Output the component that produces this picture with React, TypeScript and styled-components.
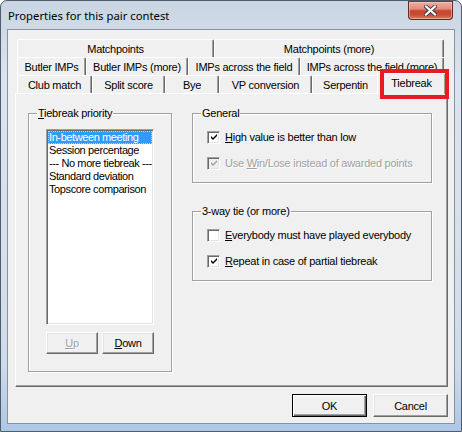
import React from 'react';
import styled, { createGlobalStyle } from 'styled-components';

const GlobalStyle = createGlobalStyle`
  html, body { margin: 0; padding: 0; background: #ffffff; }
  body { width: 462px; height: 432px; overflow: hidden; }
  * { box-sizing: border-box; }
`;

const Window = styled.div`
  width: 462px;
  height: 432px;
  display: flex;
  flex-direction: column;
  padding: 0 6px 7px 6px;
  border: 1px solid #4e5c6b;
  border-radius: 7px 7px 0 0;
  background:
    linear-gradient(180deg, rgba(255,255,255,0) 85%, rgba(150,185,228,0.55) 100%),
    linear-gradient(180deg, #c9d5e2 0%, #dbe4ee 18%, #d6e0eb 60%, #cad8e8 100%);
  font-family: "Liberation Sans", Arial, sans-serif;
  font-size: 11px;
  letter-spacing: -0.25px;
  color: #000;
`;

const TitleBar = styled.div`
  height: 28px;
  display: flex;
  align-items: flex-start;
  justify-content: space-between;
  padding-left: 1px;
`;

const TitleText = styled.div`
  height: 28px;
  display: flex;
  align-items: center;
  font-family: "Noto Sans", "Liberation Sans", sans-serif;
  font-size: 11.3px;
  letter-spacing: 0;
  color: #000;
`;

const CloseButton = styled.div`
  width: 45px;
  height: 19px;
  margin-right: 2px;
  border: 1px solid #5e2a22;
  border-top-color: #7a3a30;
  border-radius: 0 0 4px 4px;
  background: linear-gradient(180deg, #eab0a2 0%, #e08f7c 40%, #c9452d 52%, #c74b33 75%, #dd7f62 100%);
  box-shadow: inset 0 0 0 1px rgba(255, 220, 210, 0.45);
  display: flex;
  align-items: center;
  justify-content: center;
`;

const Client = styled.div`
  flex: 1;
  display: flex;
  flex-direction: column;
  border: 1px solid #8492a1;
  background: #f0f0f0;
  padding: 9px 6px 6px 7px;
`;

const TabStrip = styled.div`
  display: flex;
  flex-direction: column;
  margin-left: 2px;
`;

const TabRow = styled.div`
  display: flex;
  height: 18px;
  align-items: flex-start;
`;

const Tab = styled.div<{ $w: number; $sel?: boolean }>`
  position: relative;
  width: ${(p) => p.$w + (p.$sel ? 4 : 0)}px;
  height: ${(p) => (p.$sel ? 21 : 18)}px;
  margin: ${(p) => (p.$sel ? '-2px -2px 0 -2px' : '0')};
  z-index: ${(p) => (p.$sel ? 2 : 0)};
  display: flex;
  align-items: center;
  justify-content: center;
  padding: ${(p) => (p.$sel ? '0 0 3px 0' : '1px 0 0 0')};
  white-space: nowrap;
  background: #f0f0f0;
  border-top: 1px solid #ffffff;
  border-left: 1px solid #ffffff;
  border-right: 1px solid #696969;
  border-radius: 2px 2px 0 0;
  box-shadow: inset -1px 0 0 #a0a0a0;
`;

const Highlight = styled.div`
  position: absolute;
  left: 2px;
  top: -5px;
  width: 69px;
  height: 30px;
  border: 4px solid #e61b23;
  pointer-events: none;
`;

const Panel = styled.div`
  height: 294px;
  display: flex;
  align-items: flex-start;
  gap: 20px;
  padding: 19px 0 0 12px;
  background: #f0f0f0;
  border-top: 1px solid #ffffff;
  border-left: 1px solid #ffffff;
  border-right: 1px solid #696969;
  border-bottom: 1px solid #696969;
  box-shadow: inset -1px -1px 0 #a0a0a0;
`;

const GroupBox = styled.div<{ $w: number }>`
  position: relative;
  width: ${(p) => p.$w}px;
  border: 1px solid #a0a0a0;
  box-shadow: inset 1px 1px 0 #ffffff, 1px 1px 0 #ffffff;
`;

const GroupLabel = styled.span`
  position: absolute;
  left: 8px;
  top: -7px;
  padding: 0 1px;
  line-height: 13px;
  background: #f0f0f0;
  white-space: nowrap;
`;

const PriorityBody = styled.div`
  display: flex;
  flex-direction: column;
  gap: 7px;
  padding: 15px 0 17px 17px;
`;

const ListBox = styled.div`
  width: 108px;
  height: 196px;
  padding: 1px;
  background: #ffffff;
  border-top: 1px solid #a0a0a0;
  border-left: 1px solid #a0a0a0;
  border-right: 1px solid #ffffff;
  border-bottom: 1px solid #ffffff;
  box-shadow: inset 1px 1px 0 #696969, inset -1px -1px 0 #e3e3e3;
  display: flex;
  flex-direction: column;
`;

const ListItem = styled.div<{ $sel?: boolean }>`
  height: 13px;
  line-height: 13px;
  padding-left: 1px;
  white-space: nowrap;
  letter-spacing: -0.4px;
  color: ${(p) => (p.$sel ? '#ffffff' : '#000000')};
  background: ${(p) => (p.$sel ? '#3399ff' : 'transparent')};
  outline: ${(p) => (p.$sel ? '1px dotted #f2d36b' : 'none')};
  outline-offset: -1px;
`;

const ButtonRow = styled.div`
  display: flex;
  gap: 4px;
`;

const Button = styled.button<{ $w: number; $h: number; $default?: boolean }>`
  width: ${(p) => p.$w}px;
  height: ${(p) => p.$h}px;
  padding: 0;
  margin: 0;
  font: inherit;
  letter-spacing: inherit;
  color: #000;
  background: #f0f0f0;
  border: 1px solid;
  border-color: ${(p) => (p.$default ? '#000000' : '#ffffff #696969 #696969 #ffffff')};
  box-shadow: ${(p) =>
    p.$default
      ? 'inset 1px 1px 0 #ffffff, inset -1px -1px 0 #696969, inset -2px -2px 0 #a0a0a0'
      : 'inset -1px -1px 0 #a0a0a0, inset 1px 1px 0 #e3e3e3'};
  &:disabled {
    color: #a0a0a0;
    text-shadow: 1px 1px 0 #ffffff;
  }
`;

const Acc = styled.span`
  text-decoration: underline;
  text-underline-offset: 1px;
`;

const RightColumn = styled.div`
  width: 240px;
  display: flex;
  flex-direction: column;
  gap: 28px;
`;

const CheckBody = styled.div`
  display: flex;
  flex-direction: column;
  gap: 13px;
  padding: 17px 0 12px 14px;
`;

const CheckRow = styled.div<{ $disabled?: boolean }>`
  display: flex;
  align-items: center;
  gap: 5px;
  height: 13px;
  line-height: 13px;
  white-space: nowrap;
  color: ${(p) => (p.$disabled ? '#a0a0a0' : '#000000')};
  text-shadow: ${(p) => (p.$disabled ? '1px 1px 0 #ffffff' : 'none')};
`;

const CheckBoxSquare = styled.span<{ $disabled?: boolean }>`
  flex: none;
  width: 13px;
  height: 13px;
  display: flex;
  align-items: center;
  justify-content: center;
  background: ${(p) => (p.$disabled ? '#f0f0f0' : '#ffffff')};
  border-top: 1px solid #a0a0a0;
  border-left: 1px solid #a0a0a0;
  border-right: 1px solid #ffffff;
  border-bottom: 1px solid #ffffff;
  box-shadow: inset 1px 1px 0 #696969, inset -1px -1px 0 #e3e3e3;
`;

const ButtonBar = styled.div`
  display: flex;
  justify-content: flex-end;
  gap: 6px;
  margin-top: 7px;
`;

const CheckMark = ({ color }: { color: string }) => (
  <svg width="7" height="7" viewBox="0 0 7 7" style={{ marginLeft: 1 }}>
    <path d="M0 2 L2 4 L6 0 L6 2 L2 6 L0 4 Z" fill={color} />
  </svg>
);

const CheckBox = ({
  checked,
  disabled,
  children,
}: {
  checked?: boolean;
  disabled?: boolean;
  children: React.ReactNode;
}) => (
  <CheckRow $disabled={disabled}>
    <CheckBoxSquare $disabled={disabled}>
      {checked && <CheckMark color={disabled ? '#a0a0a0' : '#000000'} />}
    </CheckBoxSquare>
    <span>{children}</span>
  </CheckRow>
);

const CloseGlyph = () => (
  <svg width="13" height="11" viewBox="0 0 13 11">
    <path d="M2 1.5 L11 9.5 M11 1.5 L2 9.5" stroke="#3b3b48" strokeWidth="4" strokeLinecap="square" />
    <path d="M2 1.5 L11 9.5 M11 1.5 L2 9.5" stroke="#ffffff" strokeWidth="2.2" strokeLinecap="square" />
  </svg>
);

const rows: { label: string; w: number; sel?: boolean }[][] = [
  [
    { label: 'Matchpoints', w: 197 },
    { label: 'Matchpoints (more)', w: 230 },
  ],
  [
    { label: 'Butler IMPs', w: 69 },
    { label: 'Butler IMPs (more)', w: 102 },
    { label: 'IMPs across the field', w: 112 },
    { label: 'IMPs across the field (more)', w: 144 },
  ],
  [
    { label: 'Club match', w: 75 },
    { label: 'Split score', w: 73 },
    { label: 'Bye', w: 54 },
    { label: 'VP conversion', w: 93 },
    { label: 'Serpentin', w: 67 },
    { label: 'Tiebreak', w: 65, sel: true },
  ],
];

const priorities = [
  'In-between meeting',
  'Session percentage',
  '--- No more tiebreak ---',
  'Standard deviation',
  'Topscore comparison',
];

export default function App() {
  return (
    <>
      <GlobalStyle />
      <Window>
        <TitleBar>
          <TitleText>Properties for this pair contest</TitleText>
          <CloseButton>
            <CloseGlyph />
          </CloseButton>
        </TitleBar>
        <Client>
          <TabStrip>
            {rows.map((row, i) => (
              <TabRow key={i}>
                {row.map((t) => (
                  <Tab key={t.label} $w={t.w} $sel={t.sel}>
                    {t.label}
                    {t.sel && <Highlight />}
                  </Tab>
                ))}
              </TabRow>
            ))}
          </TabStrip>
          <Panel>
            <GroupBox $w={144}>
              <GroupLabel>
                <Acc>T</Acc>iebreak priority
              </GroupLabel>
              <PriorityBody>
                <ListBox>
                  {priorities.map((p, i) => (
                    <ListItem key={p} $sel={i === 0}>
                      {p}
                    </ListItem>
                  ))}
                </ListBox>
                <ButtonRow>
                  <Button $w={52} $h={22} disabled>
                    <Acc>U</Acc>p
                  </Button>
                  <Button $w={52} $h={22}>
                    <Acc>D</Acc>own
                  </Button>
                </ButtonRow>
              </PriorityBody>
            </GroupBox>
            <RightColumn>
              <GroupBox $w={240}>
                <GroupLabel>General</GroupLabel>
                <CheckBody>
                  <CheckBox checked>
                    <Acc>H</Acc>igh value is better than low
                  </CheckBox>
                  <CheckBox checked disabled>
                    Use <Acc>W</Acc>in/Lose instead of awarded points
                  </CheckBox>
                </CheckBody>
              </GroupBox>
              <GroupBox $w={240}>
                <GroupLabel>3-way tie (or more)</GroupLabel>
                <CheckBody>
                  <CheckBox>
                    <Acc>E</Acc>verybody must have played everybody
                  </CheckBox>
                  <CheckBox checked>
                    <Acc>R</Acc>epeat in case of partial tiebreak
                  </CheckBox>
                </CheckBody>
              </GroupBox>
            </RightColumn>
          </Panel>
          <ButtonBar>
            <Button $w={75} $h={23} $default>
              OK
            </Button>
            <Button $w={75} $h={23}>
              Cancel
            </Button>
          </ButtonBar>
        </Client>
      </Window>
    </>
  );
}
